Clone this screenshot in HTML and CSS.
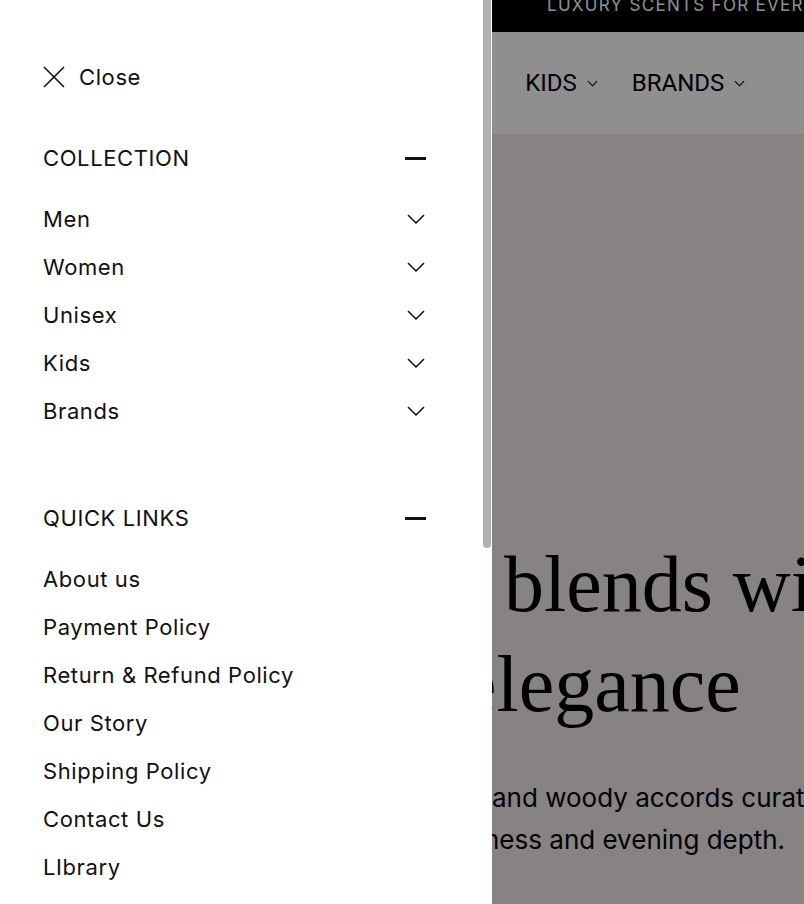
FILE: index.html
```html
<!DOCTYPE html>
<html lang="en">
<head>
<meta charset="utf-8">
<title>Menu</title>
<link rel="stylesheet" href="styles.css">
</head>
<body>
<div class="site">
  <div class="announce"><span class="announce-text">LUXURY SCENTS FOR EVERY OCCASION</span></div>
  <nav class="nav">
    <span class="nav-item">UNISEX <svg class="nav-chev" viewBox="0 0 12 7"><path d="M1 1l5 5 5-5"/></svg></span>
    <span class="nav-item">KIDS <svg class="nav-chev" viewBox="0 0 12 7"><path d="M1 1l5 5 5-5"/></svg></span>
    <span class="nav-item">BRANDS <svg class="nav-chev" viewBox="0 0 12 7"><path d="M1 1l5 5 5-5"/></svg></span>
  </nav>
  <section class="hero">
    <h1 class="hero-title"><span class="line line-1">blends with</span><span class="line line-2">elegance</span></h1>
    <p class="hero-copy"><span class="line copy-1">and woody accords curated</span><span class="line copy-2">ness and evening depth.</span></p>
  </section>
</div>
<div class="overlay"></div>
<aside class="drawer">
  <div class="drawer-body">
    <button class="close"><svg class="close-icon" viewBox="0 0 22 22"><path d="M1 1l20 20M21 1L1 21"/></svg><span>Close</span></button>
    <div class="section">
      <div class="section-head"><span>COLLECTION</span><span class="minus"></span></div>
      <ul class="list">
        <li class="item"><span>Men</span><svg class="chev" viewBox="0 0 18 10"><path d="M1 1l8 8 8-8"/></svg></li>
        <li class="item"><span>Women</span><svg class="chev" viewBox="0 0 18 10"><path d="M1 1l8 8 8-8"/></svg></li>
        <li class="item"><span>Unisex</span><svg class="chev" viewBox="0 0 18 10"><path d="M1 1l8 8 8-8"/></svg></li>
        <li class="item"><span>Kids</span><svg class="chev" viewBox="0 0 18 10"><path d="M1 1l8 8 8-8"/></svg></li>
        <li class="item"><span>Brands</span><svg class="chev" viewBox="0 0 18 10"><path d="M1 1l8 8 8-8"/></svg></li>
      </ul>
    </div>
    <div class="section section-links">
      <div class="section-head"><span>QUICK LINKS</span><span class="minus"></span></div>
      <ul class="list">
        <li class="item">About us</li>
        <li class="item">Payment Policy</li>
        <li class="item">Return &amp; Refund Policy</li>
        <li class="item">Our Story</li>
        <li class="item">Shipping Policy</li>
        <li class="item">Contact Us</li>
        <li class="item">LIbrary</li>
      </ul>
    </div>
  </div>
  <div class="scrolltrack"><div class="scrollthumb"></div></div>
</aside>
</body>
</html>
```
FILE: styles.css
```css
* { box-sizing: border-box; }
html, body { margin: 0; padding: 0; height: 100%; overflow: hidden; }
body { font-family: "Inter", "Liberation Sans", sans-serif; color: #111; background: #fff; }

.site { width: 804px; height: 904px; display: flex; flex-direction: column; overflow: hidden; }
.announce { height: 32px; background: #000; color: #fff; overflow: hidden; padding-left: 547px; white-space: nowrap; }
.announce-text { display: block; font-size: 17px; letter-spacing: 1.3px; line-height: 18px; margin-top: -4px; }

.nav { height: 102px; background: #fff; display: flex; align-items: center; padding-left: 388px; gap: 34px; white-space: nowrap; overflow: hidden; }
.nav-item { font-family: "Roboto", sans-serif; font-size: 24px; color: #000; display: flex; align-items: center; gap: 10px; }
.nav-chev { width: 11px; height: 7px; fill: none; stroke: #000; stroke-width: 1.2; }

.hero { flex: 1; background: #f1eaea; padding-top: 400px; white-space: nowrap; overflow: hidden; }
.line { display: block; }
.hero-title { margin: 0; font-family: "Liberation Serif", serif; font-weight: 400; font-size: 80px; line-height: 100px; color: #000; }
.line-1 { margin-left: 504px; }
.line-2 { margin-left: 461px; }
.hero-copy { margin: 43px 0 0; font-size: 26px; line-height: 42px; color: #000; }
.copy-1 { margin-left: 492px; }
.copy-2 { margin-left: 484px; }

.overlay { position: fixed; inset: 0; background: rgba(0, 0, 0, 0.44); }

.drawer { position: fixed; left: 0; top: 0; bottom: 0; width: 492px; background: #fff; display: flex; }
.drawer-body { width: 483px; padding: 66px 56px 0 43px; letter-spacing: 0.6px; }
.close { display: flex; align-items: center; gap: 14px; height: 22px; padding: 0; border: 0; background: none; font: inherit; font-size: 22px; letter-spacing: 0.6px; color: #111; cursor: pointer; }
.close-icon { width: 22px; height: 22px; fill: none; stroke: #111; stroke-width: 1.6; }

.section { margin-top: 55px; }
.section-links { margin-top: 68px; }
.section-head { height: 30px; display: flex; align-items: center; justify-content: space-between; font-size: 22px; }
.minus { width: 21px; height: 3px; background: #111; margin-right: 1px; }
.list { list-style: none; margin: 22px 0 0; padding: 0; }
.item { height: 48px; display: flex; align-items: center; justify-content: space-between; font-size: 22px; }
.chev { width: 18px; height: 10px; fill: none; stroke: #111; stroke-width: 1.5; margin-right: 2px; }

.scrolltrack { width: 9px; background: #fff; }
.scrollthumb { width: 8px; height: 548px; background: #b1b1b1; border-radius: 0 0 4px 4px; }
```
